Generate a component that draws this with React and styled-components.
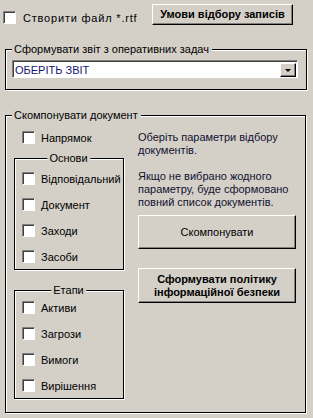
import React from 'react'
import styled, { createGlobalStyle } from 'styled-components'

const GlobalStyle = createGlobalStyle`
  html, body {
    margin:0;
    padding:0;
    background:#d4d0c8;
  }
  body {
    font-family:"Liberation Sans", Arial, sans-serif;
    font-size:11px;
    color:#000;
  }
`

const Window = styled.div`
  width:313px;
  height:418px;
  box-sizing:border-box;
  background:#d4d0c8;
  display:flex;
  flex-direction:column;
`

const TopBar = styled.div`
  display:flex;
  align-items:flex-start;
  padding:4px 20px 0 3px;
  height:21px;
`

const CheckRow = styled.label`
  display:flex;
  align-items:center;
  gap:${props => props.gap || 6}px;
  height:13px;
  font-size:${props => props.size || 11}px;
  letter-spacing:${props => props.spacing || 0}px;
  margin-top:${props => props.top || 0}px;
  margin-left:${props => props.left || 0}px;
  white-space:nowrap;
`

const Box = styled.span`
  width:13px;
  height:13px;
  box-sizing:border-box;
  flex:none;
  background:#fff;
  border:1px solid;
  border-color:#808080 #fff #fff #808080;
  box-shadow:inset 1px 1px 0 #404040;
`

const Button = styled.button`
  font-family:inherit;
  font-size:11px;
  font-weight:${props => props.bold ? 'bold' : 'normal'};
  line-height:13px;
  color:#000;
  background:#d4d0c8;
  border:1px solid;
  border-color:#fff #000 #000 #fff;
  box-shadow:inset -1px -1px 0 #808080;
  padding:0;
  width:${props => props.w}px;
  height:${props => props.h}px;
  margin-left:${props => props.auto ? 'auto' : '0'};
  margin-top:${props => props.top || 0}px;
  text-align:center;
`

const Frame = styled.div`
  position:relative;
  box-sizing:border-box;
  border:1px solid ${props => props.soft ? '#808080' : '#000'};
  box-shadow:inset 1px 1px 0 #fff, 1px 1px 0 #fff;
`

const ReportFrame = styled(Frame)`
  margin:24px 6px 0 5px;
  height:41px;
  padding:10px 8px 0 6px;
`

const DocFrame = styled(Frame)`
  margin:25px 7px 0 5px;
  height:298px;
  padding:15px 9px 0 8px;
  display:grid;
  grid-template-columns:110px 158px;
  column-gap:14px;
  align-items:start;
`

const SubFrame = styled(Frame)`
  width:110px;
  display:flex;
  flex-direction:column;
  gap:13px;
  padding:${props => props.pt}px 0 6px 7px;
  margin-top:${props => props.mt}px;
`

const Title = styled.span`
  position:absolute;
  top:-8px;
  left:${props => props.center ? '50%' : '6px'};
  transform:${props => props.center ? 'translateX(-50%)' : 'none'};
  padding:0 3px 0 2px;
  background:#d4d0c8;
  line-height:14px;
  white-space:nowrap;
`

const Combo = styled.div`
  display:flex;
  align-items:center;
  height:18px;
  box-sizing:border-box;
  background:#fff;
  border:1px solid;
  border-color:#808080 #fff #fff #808080;
  box-shadow:inset 1px 1px 0 #404040;
  padding:1px 1px 0 2px;
`

const ComboText = styled.span`
  flex:1;
  color:#14146e;
`

const ComboArrow = styled.span`
  width:16px;
  height:14px;
  box-sizing:border-box;
  background:#d4d0c8;
  border:1px solid;
  border-color:#fff #000 #000 #fff;
  box-shadow:inset -1px -1px 0 #808080;
  display:flex;
  align-items:center;
  justify-content:center;
  &::after {
    content:'';
    border-left:3px solid transparent;
    border-right:3px solid transparent;
    border-top:3px solid #000;
    margin-top:1px;
  }
`

const LeftCol = styled.div`
  display:flex;
  flex-direction:column;
`

const RightCol = styled.div`
  display:flex;
  flex-direction:column;
  line-height:13px;
`

const Note = styled.p`
  margin:0 0 ${props => props.mb}px;
  color:#101030;
`

const App = () => {
  return (
    <Window>
      <GlobalStyle />
      <TopBar>
        <CheckRow top={7} gap={7} spacing={0.8}>
          <Box />
          Створити файл *.rtf
        </CheckRow>
        <Button bold auto w={141} h={21}>Умови відбору записів</Button>
      </TopBar>

      <ReportFrame>
        <Title>Сформувати звіт з оперативних задач</Title>
        <Combo>
          <ComboText>ОБЕРІТЬ ЗВІТ</ComboText>
          <ComboArrow />
        </Combo>
      </ReportFrame>

      <DocFrame>
        <Title>Скомпонувати документ</Title>
        <LeftCol>
          <CheckRow left={8}>
            <Box />
            Напрямок
          </CheckRow>
          <SubFrame pt={13} mt={14}>
            <Title center>Основи</Title>
            <CheckRow><Box />Відповідальний</CheckRow>
            <CheckRow><Box />Документ</CheckRow>
            <CheckRow><Box />Заходи</CheckRow>
            <CheckRow><Box />Засоби</CheckRow>
          </SubFrame>
          <SubFrame pt={10} mt={20}>
            <Title center>Етапи</Title>
            <CheckRow><Box />Активи</CheckRow>
            <CheckRow><Box />Загрози</CheckRow>
            <CheckRow><Box />Вимоги</CheckRow>
            <CheckRow><Box />Вирішення</CheckRow>
          </SubFrame>
        </LeftCol>
        <RightCol>
          <Note mb={13}>Оберіть параметри відбору документів.</Note>
          <Note mb={6}>Якщо не вибрано жодного параметру, буде сформовано повний список документів.</Note>
          <Button w={158} h={34}>Скомпонувати</Button>
          <Button bold w={158} h={35} top={19}>Сформувати політику<br />інформаційної безпеки</Button>
        </RightCol>
      </DocFrame>
    </Window>
  )
}

export default App
